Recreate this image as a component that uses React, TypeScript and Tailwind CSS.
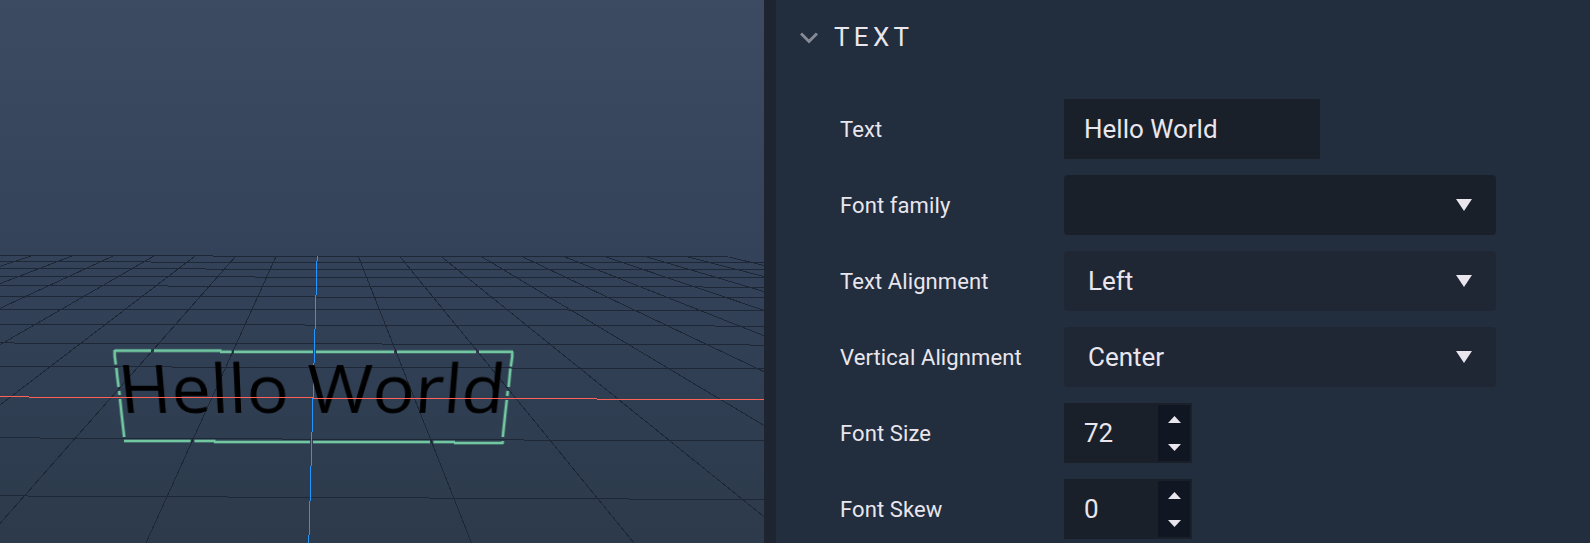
import React from "react";

const GRID = "#1d2735";
const AXIS_X = "#ff6357";
const AXIS_Z = "#2196ff";

// Each row: y of the first step, followed by the x positions where the line drops one pixel.
const rows: { y: number; steps: number[]; color: string }[] = [
  { y: 255, steps: [0, 213, 728], color: GRID },
  { y: 261, steps: [0, 151, 764], color: GRID },
  { y: 268, steps: [0, 206, 764], color: GRID },
  { y: 276, steps: [0, 255, 764], color: GRID },
  { y: 285, steps: [0, 168, 703, 764], color: GRID },
  { y: 296, steps: [0, 315, 764], color: GRID },
  { y: 309, steps: [0, 568, 764], color: GRID },
  { y: 324, steps: [0, 305, 715, 764], color: GRID },
  { y: 342, steps: [0, 14, 382, 750, 764], color: GRID },
  { y: 366, steps: [0, 172, 510, 764], color: GRID },
  { y: 437, steps: [0, 40, 282, 524, 764], color: GRID },
  { y: 495, steps: [0, 28, 228, 429, 629, 764], color: GRID },
];
const redRow = { y: 396, steps: [0, 29, 313, 597, 764], color: AXIS_X };

const diagonals = [
  [31, 256, 0, 266.3],
  [72, 256, 0, 283.7],
  [113, 256, 0, 308.3],
  [154, 256, 0, 344.7],
  [195, 256, 0, 405],
  [235.5, 256.5, 0, 523.5],
  [276.2, 256, 146, 543],
  [358.2, 256, 471.5, 543],
  [399.5, 256, 634, 543],
  [440.5, 256, 764, 516.7],
  [482, 257, 764, 425.5],
  [523, 257, 764, 371.7],
  [565, 257, 764, 335.7],
  [606, 257, 764, 310.3],
  [647, 257, 764, 291.5],
  [688, 257, 764, 276.5],
  [729, 257, 764, 265.5],
];

const blueSteps = [256, 261, 295, 329, 363, 398, 432, 466, 501, 535, 543];

const outline =
  "M114.5 350.7H151M154 350.7H221.5M220 351.8H231.5M234 351.8H313M316 351.8H394M397 351.8H476M479 351.8H513 M124 441H190.5M194.5 441H215.5M214 442H310M313 442H430M433.5 442H455M454 443H503.5";
const outlineSides =
  "M114.7 350V356L115.8 364.5M116.4 368L117.2 376L118.6 387M119.2 391L119.6 395M120 399L121.8 416L124.2 437 M512.2 351.5V357L510.8 366.5M510.4 368.5L508.6 387M507.8 391L507.2 396M506.8 400L505.2 414L502.8 437M502.6 441V443.5";

function Row({ y, steps, color }: { y: number; steps: number[]; color: string }) {
  return (
    <>
      {steps.slice(0, -1).map((x, i) => (
        <rect key={x} x={x} y={y + i} width={steps[i + 1] - x} height={1} fill={color} />
      ))}
    </>
  );
}

function Viewport() {
  return (
    <section className="relative h-full w-[764px] shrink-0 overflow-hidden bg-linear-to-b from-[#3c4b61] via-[#334158] via-55% to-[#2c3a4b]">
      <svg className="absolute inset-0" width="764" height="543" shapeRendering="crispEdges">
        {rows.map((r) => (
          <Row key={r.y} {...r} />
        ))}
        {diagonals.map(([x1, y1, x2, y2]) => (
          <line key={x1} x1={x1} y1={y1} x2={x2} y2={y2} stroke={GRID} strokeWidth="1" />
        ))}
        {blueSteps.slice(0, -1).map((y, i) => (
          <rect key={y} x={317 - i} y={y} width={1} height={blueSteps[i + 1] - y} fill={AXIS_Z} />
        ))}
        <g fill="none" shapeRendering="auto">
          <path d={outline + outlineSides} stroke="#71c7a0" strokeOpacity="0.35" strokeWidth="4" />
          <path d={outline + outlineSides} stroke="#71c7a0" strokeWidth="2.2" />
        </g>
      </svg>
      <div className="absolute left-[112px] top-[341px] flex h-[91px] w-[400px] items-center justify-center whitespace-nowrap font-['Open_Sans',sans-serif] text-[72px] leading-none text-black [transform:perspective(620px)_rotateX(-20deg)_scaleX(0.984)]">
        Hello World
      </div>
      <svg className="absolute inset-0" width="764" height="543" shapeRendering="crispEdges">
        <Row {...redRow} />
      </svg>
    </section>
  );
}

function Field({ label, children }: { label: string; children: React.ReactNode }) {
  return (
    <div className="flex h-[60px] items-center">
      <div className="w-[224px] shrink-0 pt-0.5 text-[22px] leading-none tracking-[0.1px]">{label}</div>
      {children}
    </div>
  );
}

function Select({ value, className }: { value: string; className: string }) {
  return (
    <div className={`flex h-[60px] w-[432px] items-center justify-between rounded-[4px] pr-6 pl-6 ${className}`}>
      <span>{value}</span>
      <svg width="16" height="12" viewBox="0 0 16 12" fill="#e9e6ee">
        <path d="M0 0H16L8 12Z" />
      </svg>
    </div>
  );
}

function NumberInput({ value }: { value: string }) {
  return (
    <div className="flex h-[60px] w-32 items-center justify-between bg-[#1a2029] p-0.5 pl-5">
      <span>{value}</span>
      <div className="flex h-full w-8 flex-col items-center justify-between bg-[#101622] pt-[11px] pb-[10px]">
        <svg width="13" height="7" viewBox="0 0 13 7" fill="#e9e6ee">
          <path d="M0 7L6.5 0L13 7Z" />
        </svg>
        <svg width="13" height="7" viewBox="0 0 13 7" fill="#e9e6ee">
          <path d="M0 0L6.5 7L13 0Z" />
        </svg>
      </div>
    </div>
  );
}

export default function App() {
  return (
    <main className="flex h-[543px] w-[1590px] overflow-hidden bg-[#222d3d] font-[Roboto,sans-serif] text-[#e9e6ee]">
      <Viewport />
      <div className="w-3 shrink-0 bg-[#1e2430]" />
      <aside className="flex-1 pl-6">
        <header className="flex h-[75px] items-center">
          <svg width="18" height="12" viewBox="0 0 18 12" fill="none" stroke="#868a95" strokeWidth="3">
            <path d="M1 1.5L9 9.5L17 1.5" />
          </svg>
          <h2 className="ml-4 pb-0.5 text-[26px] leading-none tracking-[4.3px]">TEXT</h2>
        </header>
        <div className="mt-6 ml-10 flex flex-col gap-4 text-[26px] leading-none">
          <Field label="Text">
            <div className="flex h-[60px] w-64 items-center bg-[#1a2029] pl-5">Hello World</div>
          </Field>
          <Field label="Font family">
            <Select value="" className="bg-[#1a2029]" />
          </Field>
          <Field label="Text Alignment">
            <Select value="Left" className="bg-[#1f2735]" />
          </Field>
          <Field label="Vertical Alignment">
            <Select value="Center" className="bg-[#1f2735]" />
          </Field>
          <Field label="Font Size">
            <NumberInput value="72" />
          </Field>
          <Field label="Font Skew">
            <NumberInput value="0" />
          </Field>
        </div>
      </aside>
    </main>
  );
}
